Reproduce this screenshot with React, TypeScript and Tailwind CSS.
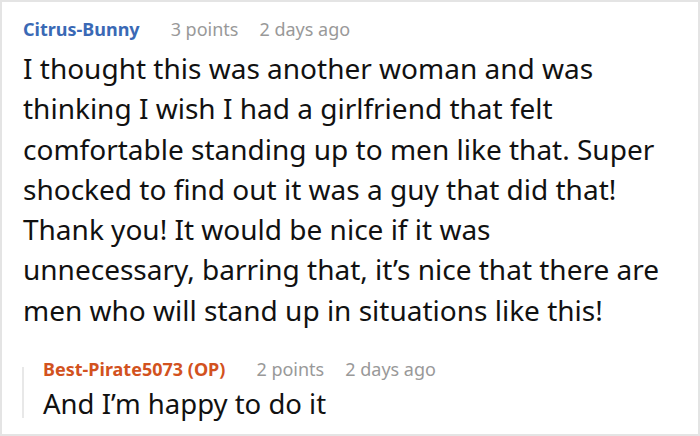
import React from 'react';

interface CommentProps {
  author: string;
  authorClass: string;
  points: string;
  age: string;
}

const Meta: React.FC<CommentProps> = ({ author, authorClass, points, age }) => (
  <div className="flex items-baseline text-[18px] leading-[25px]">
    <span className={`font-bold ${authorClass}`}>{author}</span>
    <span className="ml-[31px] text-[#999999]">{points}</span>
    <span className="ml-[21px] text-[#999999]">{age}</span>
  </div>
);

const lines = [
  'I thought this was another woman and was',
  'thinking I wish I had a girlfriend that felt',
  'comfortable standing up to men like that. Super',
  'shocked to find out it was a guy that did that!',
  'Thank you! It would be nice if it was',
  'unnecessary, barring that, it’s nice that there are',
  'men who will stand up in situations like this!',
];

export default function App() {
  return (
    <div
      className="w-[700px] h-[436px] bg-white border-2 border-[#e4e4e4] pl-[21px] pt-[15px] overflow-hidden"
      style={{ fontFamily: '"Noto Sans", "Open Sans", sans-serif' }}
    >
      <Meta author="Citrus-Bunny" authorClass="text-[#3a69b5]" points="3 points" age="2 days ago" />
      <div className="mt-[6px] text-[28px] leading-[40.3px] text-[#111111] whitespace-nowrap">
        {lines.map((l) => (
          <div key={l}>{l}</div>
        ))}
      </div>
      <div className="mt-[27px] flex">
        <div className="w-[2px] bg-[#e8e8e8] mt-[10px] mb-[4px] -ml-[1px]" />
        <div className="pl-[19px]">
          <Meta
            author="Best-Pirate5073 (OP)"
            authorClass="text-[#d2521e]"
            points="2 points"
            age="2 days ago"
          />
          <p className="mt-[4px] text-[27.5px] leading-[36px] text-[#111111]">And I’m happy to do it</p>
        </div>
      </div>
    </div>
  );
}
